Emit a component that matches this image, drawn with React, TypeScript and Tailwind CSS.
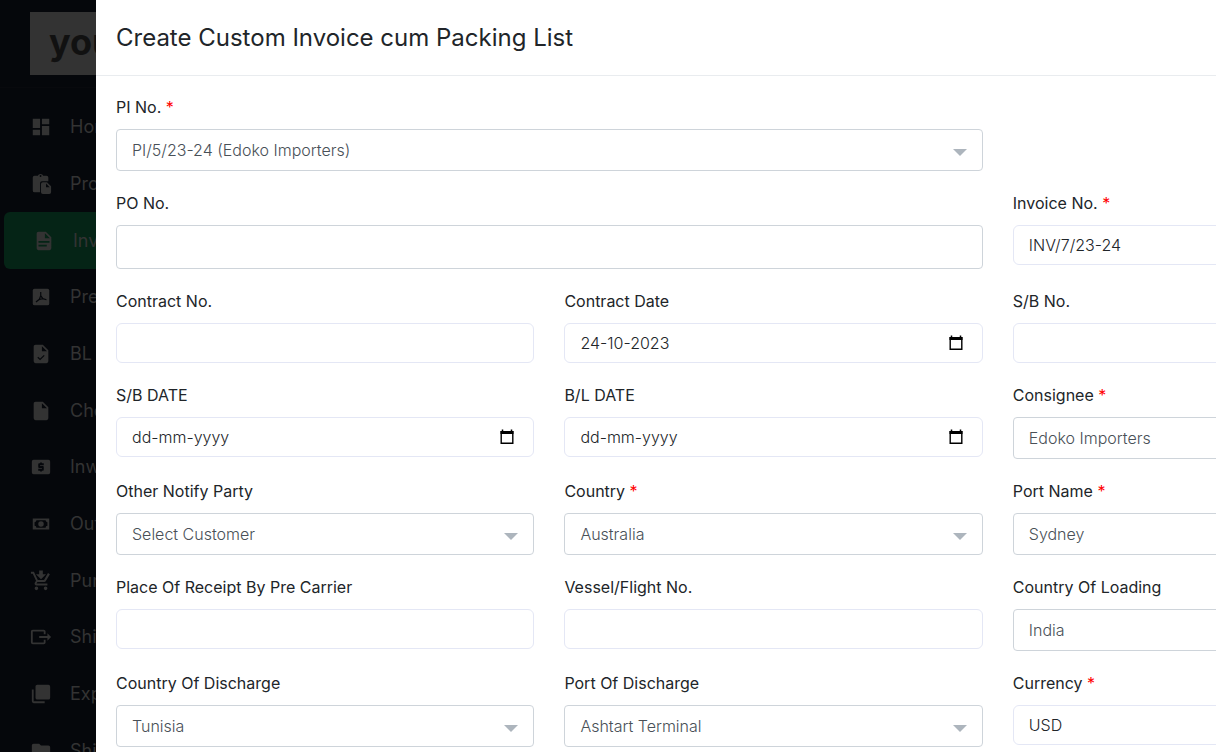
import React from 'react';

const ICONS = {
  dashboard: 'M13,3V9H21V3M13,21H21V11H13M3,21H11V15H3M3,13H11V3H3V13Z',
  paste: 'M18,3H14.3C13.9,1.8 12.9,1 11.5,1S9.1,1.8 8.700,3H5A2,2 0 0,0 3,5V19A2,2 0 0,0 5,21H11V11A2,2 0 0,1 13,9H20V5A2,2 0 0,0 18,3M11.5,4.300A1,1 0 1,1 11.500,2.300A1,1 0 0,1 11.500,4.300M14,10A2,2 0 0,0 12,12V21A2,2 0 0,0 14,23H21A2,2 0 0,0 23,21V14.500L18.500,10H14M17.500,15.500V11.500L21.500,15.500H17.500Z',
  invoice: 'M13,9H18.5L13,3.5V9M6,2H14L20,8V20A2,2 0 0,1 18,22H6C4.89,22 4,21.1 4,20V4C4,2.89 4.89,2 6,2M15,18V16H6V18H15M18,14V12H6V14H18Z',
  file: 'M13,9V3.5L18.5,9M6,2C4.89,2 4,2.89 4,4V20A2,2 0 0,0 6,22H18A2,2 0 0,0 20,20V8L14,2H6Z',
  box: 'M5,3H19A2,2 0 0,1 21,5V19A2,2 0 0,1 19,21H5A2,2 0 0,1 3,19V5A2,2 0 0,1 5,3Z',
  dollar: 'M20,4H4A2,2 0 0,0 2,6V18A2,2 0 0,0 4,20H20A2,2 0 0,0 22,18V6A2,2 0 0,0 20,4M15,10H11V11H14A1,1 0 0,1 15,12V15A1,1 0 0,1 14,16H13V17H11V16H9V14H13V13H10A1,1 0 0,1 9,12V9A1,1 0 0,1 10,8H11V7H13V8H15V10Z',
  cash: 'M3,6H21V18H3V6M12,9A3,3 0 0,1 15,12A3,3 0 0,1 12,15A3,3 0 0,1 9,12A3,3 0 0,1 12,9M7,8A2,2 0 0,1 5,10V14A2,2 0 0,1 7,16H17A2,2 0 0,1 19,14V10A2,2 0 0,1 17,8H7Z',
  cart: 'M10,0.500H14V4.500H17.500L12,10L6.500,4.500H10V0.500M7,18A2,2 0 1,0 7,22A2,2 0 0,0 7,18M17,18A2,2 0 1,0 17,22A2,2 0 0,0 17,18M7.200,14.500L8.100,13H15.600C16.300,13 17,12.600 17.300,12L21.700,4.500L19.600,3.200L15.300,11H8.500L4.300,2H1V4H3L6.600,11.600L5.200,14C4.500,15.400 5.500,17 7,17H19V14.700H7.400Z',
  export: 'M23,12L19,8V11H10V13H19V16M1,18V6C1,4.89 1.9,4 3,4H15A2,2 0 0,1 17,6V9H15V6H3V18H15V15H17V18A2,2 0 0,1 15,20H3A2,2 0 0,1 1,18Z',
  copies: 'M22,16A2,2 0 0,1 20,18H8C6.89,18 6,17.1 6,16V4C6,2.89 6.89,2 8,2H20A2,2 0 0,1 22,4V16M16,20V22H4A2,2 0 0,1 2,20V7H4V20H16Z',
  folder: 'M10,4H4C2.89,4 2,4.89 2,6V18A2,2 0 0,0 4,20H20A2,2 0 0,0 22,18V8C22,6.89 21.1,6 20,6H12L10,4Z',
};

// Thin marks cut into the filled icon shapes
const PDF_MARK = 'M6.500,17.500L10.200,14.500L11.700,10.500V6.500M11.700,10.500L14,13.800L18,15M10.200,14.700L14,13.800';
const CHECK_MARK = 'M8.500,15.500L11,18L15.500,13.500';

type NavItem = { label: string; icon: keyof typeof ICONS; mark?: string; active?: boolean };

const navItems: NavItem[] = [
  { label: 'Home', icon: 'dashboard' },
  { label: 'Proforma', icon: 'paste' },
  { label: 'Invoice', icon: 'invoice', active: true },
  { label: 'Preview', icon: 'box', mark: PDF_MARK },
  { label: 'BL', icon: 'file', mark: CHECK_MARK },
  { label: 'Check', icon: 'file' },
  { label: 'Inward', icon: 'dollar' },
  { label: 'Outward', icon: 'cash' },
  { label: 'Purchase', icon: 'cart' },
  { label: 'Ship', icon: 'export' },
  { label: 'Export', icon: 'copies' },
  { label: 'Shipper', icon: 'folder' },
];

function Sidebar() {
  return (
    <aside className="w-24 shrink-0 overflow-hidden bg-[#05070b] text-[#333333]">
      <div className="h-[88px] w-60 border-b border-[#08090d] pl-[30px] pt-3">
        <div className="flex h-[63px] items-center bg-[#333333] pb-1 pl-[19px] text-4xl font-bold text-[#111111]">
          your
        </div>
      </div>
      <nav className="w-60 pt-[11px]">
        <ul className="flex h-[680px] flex-col">
          {navItems.map((item) => (
            <li key={item.label} className="flex-1 pl-1">
              <a
                href="#"
                className={
                  item.active
                    ? 'flex h-full items-center gap-[18px] rounded-md bg-[#052416] pl-[29px] text-lg'
                    : 'flex h-full items-center gap-[18px] pl-[26px] text-lg'
                }
              >
                <svg viewBox="0 0 24 24" className="size-[22px] shrink-0" fill="currentColor">
                  <path fillRule="evenodd" d={ICONS[item.icon]} />
                  {item.mark && <path d={item.mark} fill="none" stroke="#05070b" strokeWidth="1.3" />}
                </svg>
                <span className="whitespace-nowrap">{item.label}</span>
              </a>
            </li>
          ))}
        </ul>
      </nav>
    </aside>
  );
}

type FieldProps = {
  id: string;
  label: string;
  required?: boolean;
  className?: string;
  children: React.ReactNode;
};

function Field({ id, label, required, className, children }: FieldProps) {
  return (
    <div className={className}>
      <label htmlFor={id} className="mb-[10px] block text-base text-[#212529]">
        {label} {required && <span className="text-[#ff0000]">*</span>}
      </label>
      {children}
    </div>
  );
}

function TextInput({ id, value = '' }: { id: string; value?: string }) {
  return (
    <input
      id={id}
      type="text"
      defaultValue={value}
      className="block h-10 w-full rounded-md border border-[#e4e7f5] px-[15px] font-light text-[#212529]"
    />
  );
}

function DateInput({ id, value = '' }: { id: string; value?: string }) {
  return (
    <div className="flex h-10 items-center rounded-md border border-[#e4e7f5] pl-[15px] pr-[17px]">
      <input
        id={id}
        type="text"
        defaultValue={value}
        placeholder="dd-mm-yyyy"
        className="w-full min-w-0 flex-1 font-light text-[#212529] placeholder:text-[#212529]"
      />
      <button type="button" aria-label="Open calendar" className="shrink-0">
        <svg viewBox="0 0 18 18" className="size-[18px]">
          <path d="M4.500 1.500V4M13.500 1.500V4" stroke="#000" strokeWidth="1.500" />
          <path d="M3.200 3.700H14.800V15.300H3.200Z" fill="none" stroke="#000" strokeWidth="1.400" />
          <path d="M2.500 3H15.500V6H2.500Z" fill="#000" />
        </svg>
      </button>
    </div>
  );
}

function SelectInput({ id, value }: { id: string; value: string }) {
  return (
    <div className="relative">
      <select
        id={id}
        className="block h-[42px] w-full appearance-none rounded border border-[#ced4da] bg-white px-[15px] font-light text-[#495057]"
      >
        <option>{value}</option>
      </select>
      <svg
        viewBox="0 0 14 7"
        className="pointer-events-none absolute right-4 top-5 h-[7px] w-[14px] fill-[#adb5bd]"
      >
        <path d="M0 0H14L7 7Z" />
      </svg>
    </div>
  );
}

export default function App() {
  return (
    <div className="flex h-screen overflow-hidden bg-white font-[Inter,sans-serif]">
      <Sidebar />
      <main className="min-w-0 flex-1 overflow-hidden">
        <header className="flex h-[76px] items-center border-b border-[#e9ecef] px-5">
          <h1 className="text-2xl text-[#212529]">Create Custom Invoice cum Packing List</h1>
        </header>

        {/* The form is wider than the panel, the last column runs off to the right */}
        <form className="grid w-[121%] grid-cols-3 gap-x-[30px] gap-y-5 px-5 pt-[19px]">
          <Field id="pi-no" label="PI No." required className="col-span-2">
            <SelectInput id="pi-no" value="PI/5/23-24 (Edoko Importers)" />
          </Field>

          <Field id="po-no" label="PO No." className="col-span-2 col-start-1">
            <textarea
              id="po-no"
              rows={1}
              className="block h-11 w-full resize-none rounded border border-[#ced4da] px-[15px] py-2 font-light text-[#495057]"
            />
          </Field>
          <Field id="invoice-no" label="Invoice No." required>
            <TextInput id="invoice-no" value="INV/7/23-24" />
          </Field>

          <Field id="contract-no" label="Contract No.">
            <TextInput id="contract-no" />
          </Field>
          <Field id="contract-date" label="Contract Date">
            <DateInput id="contract-date" value="24-10-2023" />
          </Field>
          <Field id="sb-no" label="S/B No.">
            <TextInput id="sb-no" />
          </Field>

          <Field id="sb-date" label="S/B DATE">
            <DateInput id="sb-date" />
          </Field>
          <Field id="bl-date" label="B/L DATE">
            <DateInput id="bl-date" />
          </Field>
          <Field id="consignee" label="Consignee" required>
            <SelectInput id="consignee" value="Edoko Importers" />
          </Field>

          <Field id="notify-party" label="Other Notify Party">
            <SelectInput id="notify-party" value="Select Customer" />
          </Field>
          <Field id="country" label="Country" required>
            <SelectInput id="country" value="Australia" />
          </Field>
          <Field id="port-name" label="Port Name" required>
            <SelectInput id="port-name" value="Sydney" />
          </Field>

          <Field id="receipt-place" label="Place Of Receipt By Pre Carrier">
            <TextInput id="receipt-place" />
          </Field>
          <Field id="vessel-no" label="Vessel/Flight No.">
            <TextInput id="vessel-no" />
          </Field>
          <Field id="loading-country" label="Country Of Loading">
            <SelectInput id="loading-country" value="India" />
          </Field>

          <Field id="discharge-country" label="Country Of Discharge">
            <SelectInput id="discharge-country" value="Tunisia" />
          </Field>
          <Field id="discharge-port" label="Port Of Discharge">
            <SelectInput id="discharge-port" value="Ashtart Terminal" />
          </Field>
          <Field id="currency" label="Currency" required>
            <TextInput id="currency" value="USD" />
          </Field>
        </form>
      </main>
    </div>
  );
}
